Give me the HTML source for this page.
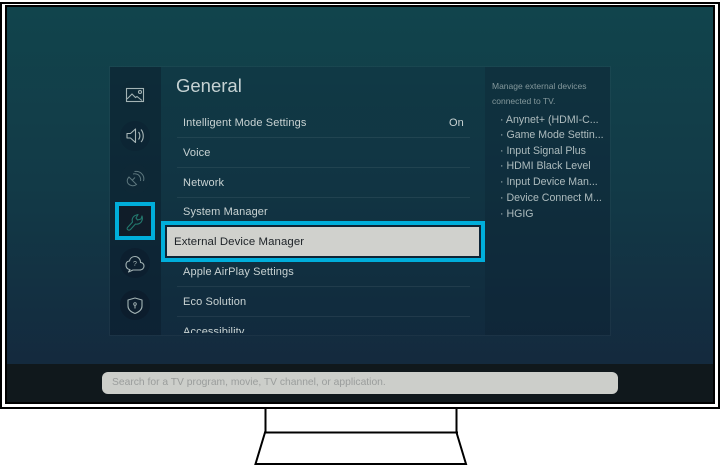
<!DOCTYPE html>
<html><head><meta charset="utf-8">
<style>
html,body{margin:0;padding:0;background:#fff}
#root{position:relative;width:720px;height:465px;overflow:hidden;background:#fff;font-family:"Liberation Sans","DejaVu Sans",sans-serif}
.abs{position:absolute}
.t{position:absolute;white-space:nowrap;color:#c9d3d3;font-size:11px;line-height:14px;letter-spacing:.12px}
.sep{position:absolute;left:177px;width:293px;height:1px;background:rgba(255,255,255,.07)}
.r{position:absolute;white-space:nowrap;color:#aebcbe;font-size:10.6px;line-height:14px;letter-spacing:0}
</style></head><body>
<div id="root">
<div class="abs" style="left:0;top:2px;width:716px;height:403px;border:2px solid #000"></div>
<div class="abs" style="left:5px;top:5px;width:706px;height:395px;border:2px solid #000;background:linear-gradient(180deg,#11444c 0%,#123a47 45%,#14263c 100%);overflow:hidden"></div>
<div class="abs" style="left:7px;top:364px;width:706px;height:38px;background:#10181c"></div>
<div class="abs" style="left:102px;top:372px;width:516px;height:22px;border-radius:6px;background:#ccceca"></div>
<div class="t" style="left:112px;top:376px;color:#9a9d9c;font-size:10.3px;letter-spacing:0">Search for a TV program, movie, TV channel, or application.</div>

<div class="abs" style="left:110px;top:67px;width:500px;height:268px;background:rgba(16,40,56,.28);box-shadow:0 0 0 1px rgba(255,255,255,.035)"></div>
<div class="abs" style="left:110px;top:67px;width:51px;height:268px;background:rgba(10,25,38,.42)"></div>
<div class="abs" style="left:485px;top:67px;width:125px;height:268px;background:rgba(10,28,42,.25)"></div>

<div class="t" style="left:176px;top:74px;font-size:18.5px;line-height:24px;color:#c5d2d3;letter-spacing:0">General</div>

<div class="t" style="left:183px;top:116px">Intelligent Mode Settings</div>
<div class="t" style="left:449px;top:116px">On</div>
<div class="sep" style="top:137px"></div>
<div class="t" style="left:183px;top:146px">Voice</div>
<div class="sep" style="top:167px"></div>
<div class="t" style="left:183px;top:176px">Network</div>
<div class="sep" style="top:197px"></div>
<div class="t" style="left:183px;top:205px">System Manager</div>

<div class="abs" style="left:161px;top:221px;width:316px;height:33px;border:4px solid #00aedb;background:#0d2436"></div>
<div class="abs" style="left:167px;top:227px;width:312px;height:29px;background:#d0d1cd"></div>
<div class="t" style="left:174px;top:235px;color:#1c2126;font-size:11.4px;letter-spacing:.1px">External Device Manager</div>

<div class="t" style="left:183px;top:265px">Apple AirPlay Settings</div>
<div class="sep" style="top:286px"></div>
<div class="t" style="left:183px;top:295px">Eco Solution</div>
<div class="sep" style="top:316px"></div>
<div class="abs" style="left:177px;top:320px;width:200px;height:13px;overflow:hidden"><div class="t" style="left:6px;top:5px">Accessibility</div></div>

<div class="r" style="left:492px;top:79px;font-size:8.5px;color:#84989c">Manage external devices</div>
<div class="r" style="left:492px;top:94px;font-size:8.5px;color:#84989c">connected to TV.</div>
<div class="r" style="left:500px;top:113px">· Anynet+ (HDMI-C...</div>
<div class="r" style="left:500px;top:128px">· Game Mode Settin...</div>
<div class="r" style="left:500px;top:144px">· Input Signal Plus</div>
<div class="r" style="left:500px;top:159px">· HDMI Black Level</div>
<div class="r" style="left:500px;top:175px">· Input Device Man...</div>
<div class="r" style="left:500px;top:191px">· Device Connect M...</div>
<div class="r" style="left:500px;top:207px">· HGIG</div>

<svg class="abs" style="left:0;top:0" width="720" height="465" viewBox="0 0 720 465" fill="none">
<circle cx="135" cy="95" r="15" fill="#0e2a36" opacity=".7"/>
<circle cx="135" cy="136" r="15" fill="#0c2433" opacity=".8"/>
<circle cx="135" cy="179" r="15" fill="#0f2736" opacity=".5"/>
<rect x="115" y="202" width="40" height="38" fill="#101d29"/>
<rect x="117" y="204" width="36" height="34" stroke="#00aedb" stroke-width="4"/>
<circle cx="135" cy="263" r="15" fill="#0c1e2e" opacity=".8"/>
<circle cx="135" cy="305" r="15" fill="#0c1c2c" opacity=".8"/>

<g stroke="#a3b3b4" stroke-width="1.1">
<rect x="126.500" y="88.500" width="17" height="13"/>
<path d="M127 99l5-5 3.500 3.500 1.500-1 5 4"/>
<circle cx="140" cy="92" r="1.500"/>
</g>
<g stroke="#a8b6b7" stroke-width="1.100" stroke-linejoin="round">
<path d="M127 133.500h3.500l5-4.500v13.500l-5-4.500H127z"/>
<path d="M138.500 132c1.800 2 1.800 5.500 0 7.500M141 129.500c3 3.500 3 9.500 0 12.500"/>
</g>
<g stroke="#5c767d" stroke-width="1">
<path d="M129 177l7.500 7.500c-2.500 2-6 1.500-8-.5-2-2-1.500-5 .5-7z"/>
<path d="M132 180.500l3-3"/>
<path d="M133 174c2-.5 5 0 6 1.500 1.500 1.500 2 4 1.500 5.500M134.500 171.500c3-.5 5.500.500 7 2 2 2 2.800 5 2 7.500"/>
</g>
<path d="M127.500 227.500l5-5.500c-1-3 .5-6 4-7l1.500-.5-2 3.500 1.500 2 3.500-1 1-3c1 3 0 6-2.500 7.500-1.500.8-2.500.8-4 .5l-5 5.500c-1 1-2 1-3 0-.5-.5-.5-1.500 0-2z" stroke="#23796e" stroke-width="1.100" stroke-linejoin="round"/>
<path d="M130 269.500l-1.500 2.500 4.500-2h6.500c3 0 4.500-2 4.500-4s-1.500-3.500-3.500-3.500c0-3.500-2.500-6-5.500-6s-5 2-5.500 4.500c-2.500 0-3.500 2-3.500 4 0 2.500 1.500 4 3.500 4.500z" stroke="#a3b3b4" stroke-width="1.100" stroke-linejoin="round"/>
<text x="135" y="266" font-family="Liberation Sans" font-size="7" fill="#a3b3b4" text-anchor="middle">?</text>
<path d="M135 298l7 2v6c0 4-3 6-7 7.500-4-1.500-7-3.500-7-7.500v-6z" stroke="#a3b3b4" stroke-width="1.100" stroke-linejoin="round"/>
<circle cx="135" cy="304" r="1.300" stroke="#a3b3b4" stroke-width=".9"/>
<path d="M135 305.500v3" stroke="#a3b3b4"/>

<path d="M265.500 408v24.500M456.500 408v24.500" stroke="#000" stroke-width="2"/>
<path d="M264 432.500h194" stroke="#000" stroke-width="2"/>
<path d="M265 432.500L255.500 464H466L456.500 432.500" stroke="#000" stroke-width="2"/>
</svg>
</div>
</body></html>
